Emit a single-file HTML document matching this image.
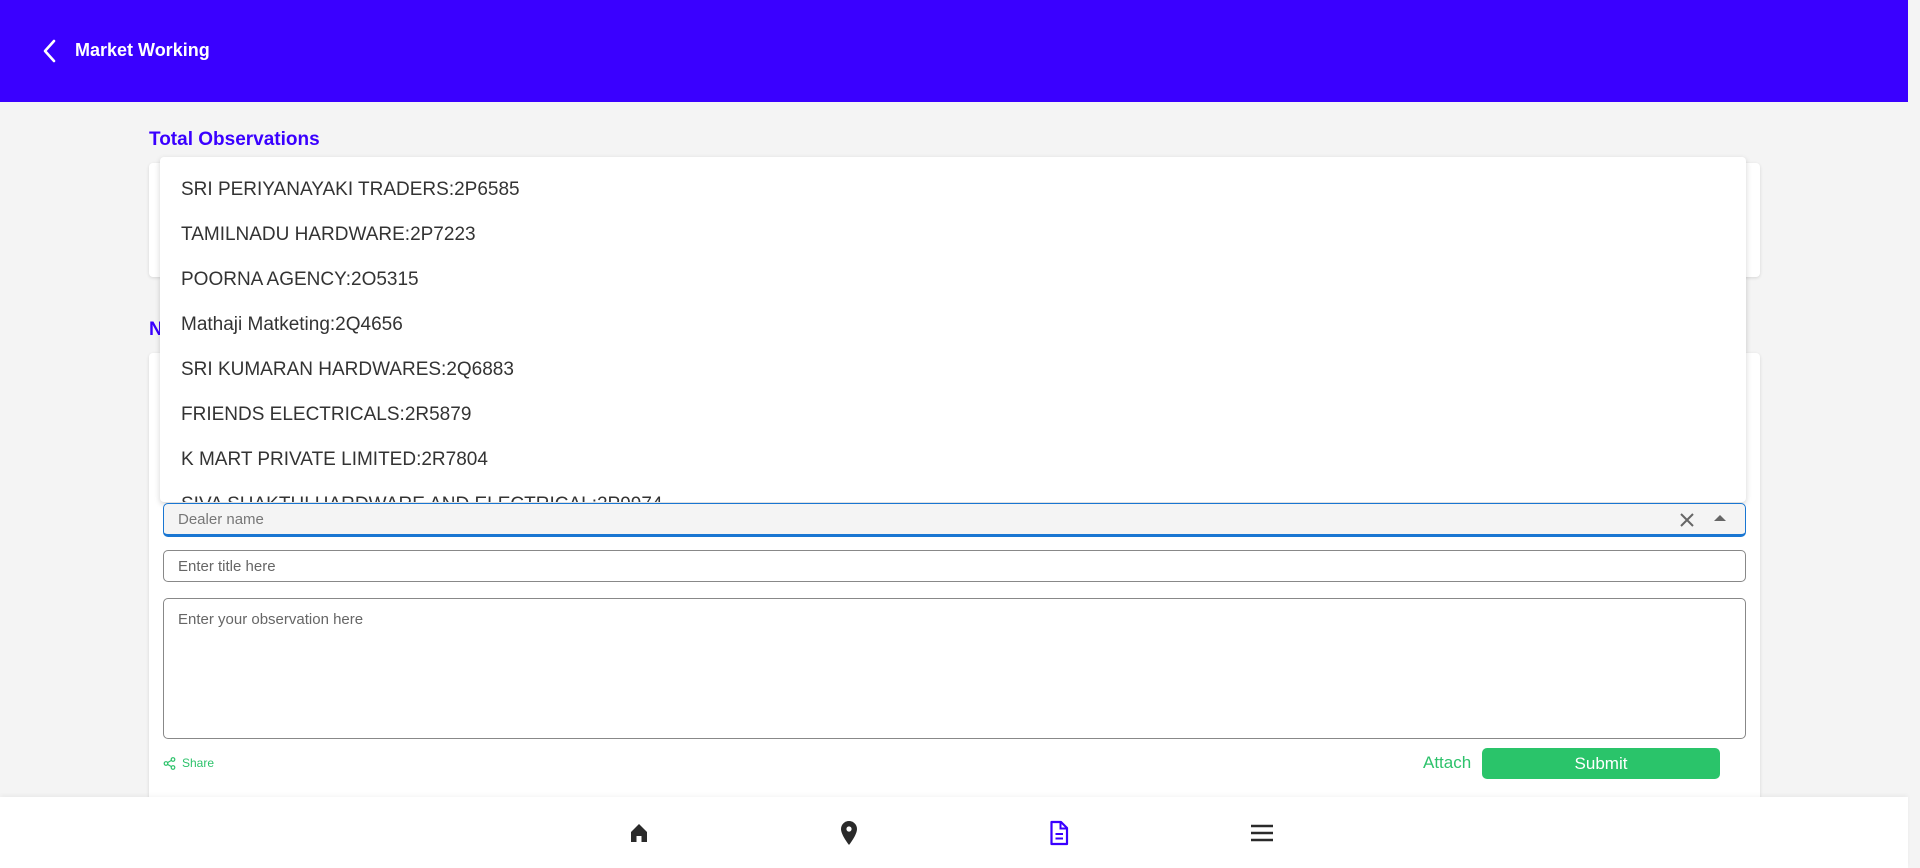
<!DOCTYPE html>
<html><head><meta charset="utf-8"><style>
*{box-sizing:border-box;margin:0;padding:0}
body{width:1920px;height:868px;overflow:hidden;background:#f4f4f4;font-family:"Liberation Sans",sans-serif;position:relative}
.abs{position:absolute}
#hdr{left:0;top:0;width:1908px;height:102px;background:#3a00ff}
#strip{left:1908px;top:0;width:12px;height:868px;background:#f4f4f4}
.card{background:#fff;border-radius:4px;box-shadow:0 1px 3px rgba(0,0,0,.12)}
.h{color:#3a00ff;font-size:19px;font-weight:bold}
.item{position:absolute;left:181px;font-size:19px;color:#333;line-height:24px}
.inp{border:1px solid #888;border-radius:5px;background:#fff;font-size:15px;color:#666;padding-left:14px}
</style></head><body>
<div id="hdr" class="abs"></div>
<div id="strip" class="abs"></div>
<svg class="abs" style="left:40px;top:38px" width="20" height="26" viewBox="0 0 20 26"><path d="M14 3 L5 13 L14 23" stroke="#fff" stroke-width="2.6" fill="none" stroke-linecap="round" stroke-linejoin="round"/></svg>
<div class="abs" style="left:75px;top:40px;color:#fff;font-size:18px;font-weight:bold">Market Working</div>

<div class="abs h" style="left:149px;top:129px">Total Observations</div>
<div class="abs card" style="left:149px;top:163px;width:1611px;height:114px"></div>
<div class="abs h" style="left:149px;top:319px">New Observation</div>
<div class="abs card" style="left:149px;top:353px;width:1611px;height:460px"></div>

<div class="abs" style="left:1726px;top:414px;width:20px;height:28px;border:1px solid #888;border-left:none;border-radius:0 4px 4px 0"></div>
<div class="abs" style="left:1726px;top:460px;width:20px;height:28px;border:1px solid #888;border-left:none;border-radius:0 4px 4px 0"></div>

<div class="abs" style="left:160px;top:157px;width:1586px;height:345px;background:#fff;border-radius:4px;box-shadow:0 2px 6px rgba(0,0,0,.18);overflow:hidden">
<div class="item" style="left:21px;top:21px">SRI PERIYANAYAKI TRADERS:2P6585</div>
<div class="item" style="left:21px;top:66px">TAMILNADU HARDWARE:2P7223</div>
<div class="item" style="left:21px;top:111px">POORNA AGENCY:2O5315</div>
<div class="item" style="left:21px;top:156px">Mathaji Matketing:2Q4656</div>
<div class="item" style="left:21px;top:201px">SRI KUMARAN HARDWARES:2Q6883</div>
<div class="item" style="left:21px;top:246px">FRIENDS ELECTRICALS:2R5879</div>
<div class="item" style="left:21px;top:291px">K MART PRIVATE LIMITED:2R7804</div>
<div class="item" style="left:21px;top:336px">SIVA SHAKTHI HARDWARE AND ELECTRICAL:2P9974</div>
</div>

<div class="abs" style="left:163px;top:503px;width:1583px;height:34px;background:#f4f4f4;border:1.5px solid #1976d2;border-bottom:3px solid #1976d2;border-radius:5px;font-size:15px;color:#777;padding:7px 0 0 14px">Dealer name</div>
<svg class="abs" style="left:1677px;top:510px" width="20" height="20" viewBox="0 0 20 20"><path d="M4 4L16 16M16 4L4 16" stroke="#666" stroke-width="2"/></svg>
<svg class="abs" style="left:1712px;top:513px" width="16" height="10" viewBox="0 0 16 10"><path d="M2 8L8 2L14 8Z" fill="#666"/></svg>

<div class="abs inp" style="left:163px;top:550px;width:1583px;height:32px;padding-top:7px">Enter title here</div>
<div class="abs inp" style="left:163px;top:598px;width:1583px;height:141px;padding-top:12px">Enter your observation here</div>

<svg class="abs" style="left:163px;top:757px" width="13" height="13" viewBox="0 0 13 13"><circle cx="10" cy="2.5" r="1.8" fill="none" stroke="#2dc26b" stroke-width="1.2"/><circle cx="3" cy="6.5" r="1.8" fill="none" stroke="#2dc26b" stroke-width="1.2"/><circle cx="10" cy="10.5" r="1.8" fill="none" stroke="#2dc26b" stroke-width="1.2"/><path d="M4.6 5.6L8.4 3.4M4.6 7.4L8.4 9.6" stroke="#2dc26b" stroke-width="1.2"/></svg>
<div class="abs" style="left:182px;top:756px;color:#2dc26b;font-size:12px">Share</div>
<div class="abs" style="left:1423px;top:753px;color:#2dc26b;font-size:17px">Attach</div>
<div class="abs" style="left:1482px;top:748px;width:238px;height:31px;background:#2ac46a;border-radius:5px;color:#fff;font-size:17px;text-align:center;line-height:31px">Submit</div>

<div class="abs" style="left:164px;top:794px;color:#444;font-size:17px;font-weight:bold">Previous Observations</div>
<div class="abs" style="left:1625px;top:794px;color:#e0603a;font-size:17px;font-weight:bold">0 Observations</div>

<div class="abs" style="left:0;top:797px;width:1908px;height:71px;background:#fff;box-shadow:0 -2px 4px rgba(0,0,0,.04)"></div>
<svg class="abs" style="left:627px;top:821px" width="24" height="24" viewBox="0 0 24 24"><path d="M12 3L4 11V21H9.5V15H14.5V21H20V11Z" fill="#2a2a2a"/></svg>
<svg class="abs" style="left:837px;top:820px" width="24" height="26" viewBox="0 0 24 26"><path d="M12 1C7.6 1 4 4.6 4 9c0 6 8 16 8 16s8-10 8-16c0-4.4-3.6-8-8-8z" fill="#2a2a2a"/><circle cx="12" cy="9" r="2.6" fill="#fff"/></svg>
<svg class="abs" style="left:1047px;top:820px" width="24" height="26" viewBox="0 0 24 26"><path d="M4.5 2H14L20 8V24H4.5Z" fill="none" stroke="#3a00ff" stroke-width="2.2" stroke-linejoin="round"/><path d="M13.5 2V8.5H20" fill="none" stroke="#3a00ff" stroke-width="2"/><path d="M8.5 14H16M8.5 18.5H16" stroke="#3a00ff" stroke-width="2"/></svg>
<svg class="abs" style="left:1249px;top:822px" width="26" height="22" viewBox="0 0 26 22"><path d="M2 4H24M2 11H24M2 18H24" stroke="#2a2a2a" stroke-width="2.4"/></svg>
</body></html>
